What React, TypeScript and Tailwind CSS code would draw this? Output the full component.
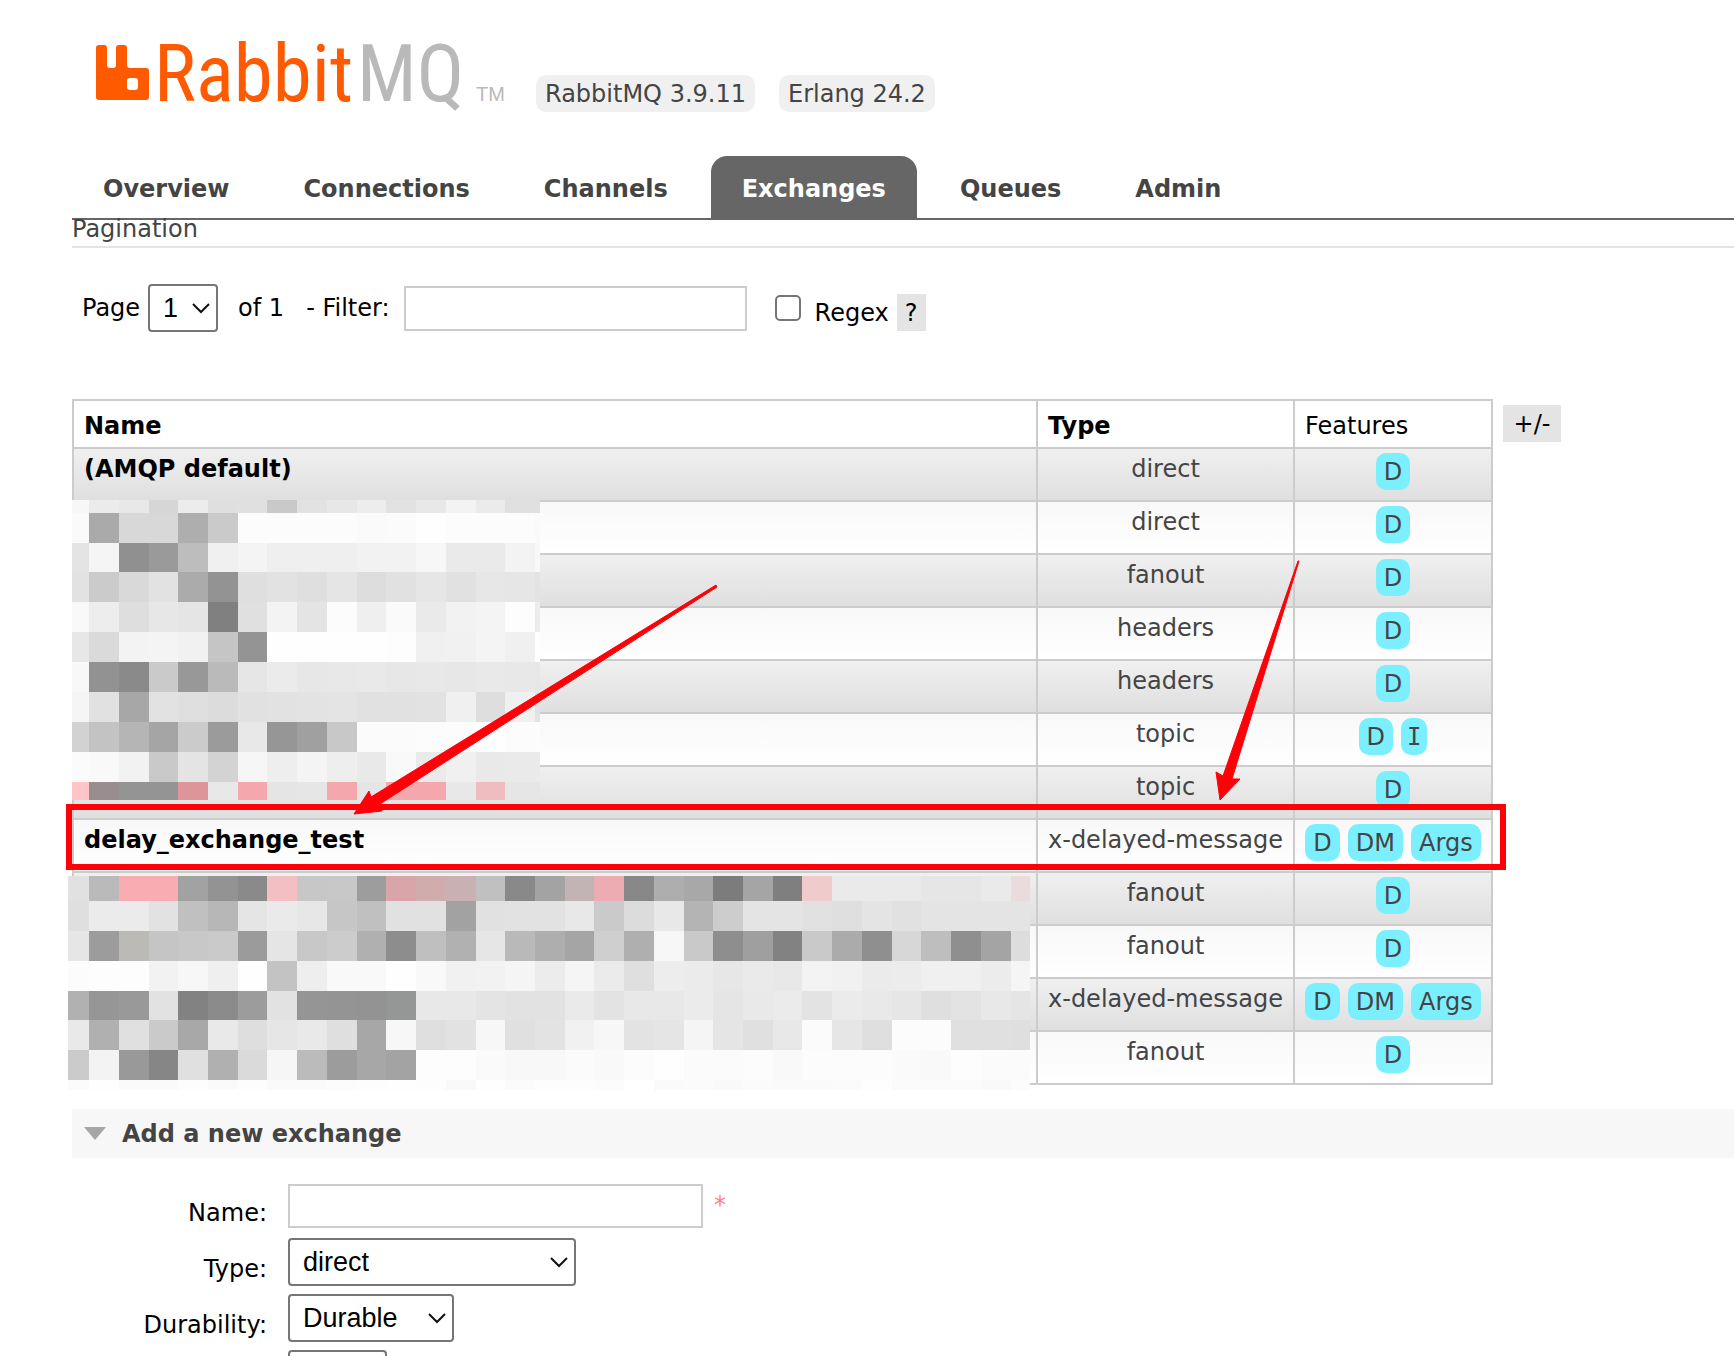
import React from "react";

interface Exchange {
  name: string;
  type: string;
  features: string[];
}

interface MosaicProps {
  xs: number[];
  ys: number[];
  rows: string[];
}

interface SelectProps {
  id: string;
  className: string;
  options: string[];
  label?: string;
}

const tabs = ["Overview", "Connections", "Channels", "Exchanges", "Queues", "Admin"];

// an empty name is a row hidden behind the mosaic
const exchanges: Exchange[] = [
  { name: "(AMQP default)", type: "direct", features: ["D"] },
  { name: "", type: "direct", features: ["D"] },
  { name: "", type: "fanout", features: ["D"] },
  { name: "", type: "headers", features: ["D"] },
  { name: "", type: "headers", features: ["D"] },
  { name: "", type: "topic", features: ["D", "I"] },
  { name: "", type: "topic", features: ["D"] },
  { name: "delay_exchange_test", type: "x-delayed-message", features: ["D", "DM", "Args"] },
  { name: "", type: "fanout", features: ["D"] },
  { name: "", type: "fanout", features: ["D"] },
  { name: "", type: "x-delayed-message", features: ["D", "DM", "Args"] },
  { name: "", type: "fanout", features: ["D"] },
];

// two digits are a grey level, six digits a full colour
const upperRows = [
  "f7 eb e8 d6 ec df e0 c9 e2 e7 ed e2 e8 f3 eb e0 e0",
  "fa aa d8 d8 ae ca fc fc fc fc fa fb fe fc fc fc fa",
  "e4 f5 90 9a bd f0 f4 ef ef ef f2 f2 f7 ea ea f3 f8",
  "e2 cb d9 e2 ab 93 df e2 df e5 dd e1 e6 e1 e7 e6 e3",
  "f9 ed de e7 e5 80 e0 f3 e4 fc ef fa ea f2 f4 fd ec",
  "e7 da f3 f4 f1 c5 94 fe fe fe fe fd f0 f1 f4 f0 fe",
  "f8 92 8a ca 98 ba e6 eb e7 e8 e9 e7 e8 e7 e9 e8 e7",
  "f5 e1 a7 e2 df dc e1 e2 e3 e4 e1 e1 e2 f0 de f0 e2",
  "d2 c3 b5 a5 cb 9b e8 96 a0 c8 fb fb fc fc fe fc fd",
  "fb f9 f2 c9 e4 d3 f6 ee f4 ee e9 f9 ea f0 e9 ea eb",
  "ffc4c8 9a8d8f 94 94 dd9599 e8 f4a7ad e5 e6 f4a7ad e5 f4a7ad f4a7ad e8 efbcc0 e6 e6",
];

const lowerRows = [
  "e1 ba f9acb2 f9acb2 a2 93 8a f4bfc3 c7 c8 9d daa5a9 d0acac c8b0b3 c0 89 a3 c2b4b5 edabb2 88 ae a8 7c a5 7f f0cbcc ea ea ea e6 e6 ea eadcdc",
  "df eb eb e2 c0 b7 e5 ea e7 c6 c0 e1 e1 a2 e1 e2 e2 e8 ca dc e8 b4 cd e4 e4 e1 df e4 e1 e4 e4 e4 e4",
  "e6 9c bbbab7 c5 c8 ca 9b e5 c8 cc b0 8d bf b1 e6 b9 ae a5 cf af f7 c9 8e 9f 82 c9 ab 8f d7 be 8f a4 dd",
  "fc fd fd f2 f7 ef fe c3 ee f9 f9 fe f9 f1 f2 f5 ec f5 eb df ed eb e7 ea e8 f3 f1 eb ec f0 f0 ec f5",
  "b1 96 99 e2 82 8b 9c e2 95 94 93 959796 e8 e8 e4 e2 e2 ea e3 e8 e8 eb e5 e9 eb e3 eb e9 e6 df e3 e8 e5",
  "e9 b0 e0 ca a8 e9 de e6 e9 df a7 f7 df e2 f7 e0 e3 f1 f7 e3 e5 f5 e5 e0 e8 fb e6 df fc fc e0 e0 df",
  "cb f3 99 86 e0 b0 da f6 bb 9c a7 a3 fd fd fa f8 f8 fb f9 fc fe fb fb fc f9 fc fc fc fa f9 fd fb fb",
  "fb fe fa fa fd fa fd fa fa fc fd fe fd f9 fe fb fd fd fc ff fa fb f9 fb fa fa fb fe fb fb fb f9 fc",
];

const upperXs = [72, 89, 119, 149, 178, 208, 238, 267, 297, 327, 357, 386, 416, 446, 476, 505, 535, 540];
const upperYs = [500, 513, 543, 572, 602, 632, 662, 692, 722, 752, 782, 800];
const lowerXs = [
  68, 89, 119, 149, 178, 208, 238, 267, 297, 327, 357, 386, 416, 446, 476, 505, 535, 565, 594, 624, 654, 684, 713,
  743, 773, 802, 832, 862, 892, 921, 951, 981, 1011, 1030,
];
const lowerYs = [876, 901, 931, 961, 991, 1020, 1050, 1080, 1090];

function Mosaic({ xs, ys, rows }: MosaicProps) {
  return (
    <g shapeRendering="crispEdges">
      {rows.map((row, r) =>
        row.split(" ").map((shade, c) => (
          <rect
            key={`${r}-${c}`}
            x={xs[c]}
            y={ys[r]}
            width={xs[c + 1] - xs[c]}
            height={ys[r + 1] - ys[r]}
            fill={shade.length === 2 ? `#${shade}${shade}${shade}` : `#${shade}`}
          />
        ))
      )}
    </g>
  );
}

function Annotations() {
  return (
    <svg
      className="absolute top-0 -left-[6px] pointer-events-none"
      width="1440"
      height="692"
      viewBox="66 399 1440 692"
      aria-hidden="true"
    >
      <Mosaic xs={upperXs} ys={upperYs} rows={upperRows} />
      <Mosaic xs={lowerXs} ys={lowerYs} rows={lowerRows} />
      <rect x="69" y="807" width="1434" height="60" fill="none" stroke="#ff0008" strokeWidth="6" />
      <path d="M716 585 L717 587 L380 804 L382 811 L354 814 L369 791 L371 797 Z" fill="#ff0008" stroke="#ff0008" />
      <path d="M1298 561 L1299 561 L1232 779 L1240 779 L1220 800 L1216 772 L1223 776 Z" fill="#ff0008" stroke="#ff0008" />
    </svg>
  );
}

function Logo() {
  return (
    <svg width="416" height="96" viewBox="96 24 416 96" role="img" aria-label="RabbitMQ">
      <path
        d="M99 45h5q3 0 3 3v17q0 3 3 3h3q3 0 3-3V48q0-3 3-3h5q3 0 3 3v17q0 3 3 3h16q3 0 3 3v26q0 3-3 3H99q-3 0-3-3V48q0-3 3-3zM130 78q-3 0-3 3v6q0 3 3 3h5q3 0 3-3v-6q0-3-3-3z"
        fill="#ff5a00"
        fillRule="evenodd"
      />
      <g className="font-['Roboto_Condensed','Roboto',sans-serif] font-normal" fontSize="79">
        <text x="154" y="101" fill="#ff5a00">
          Rabbit
        </text>
        <text x="357" y="101" fill="#b9b9b9">
          MQ
        </text>
      </g>
      <text x="476" y="101" fontSize="20" fill="#b9b9b9" className="font-['Liberation_Sans',sans-serif]">
        TM
      </text>
    </svg>
  );
}

function Select({ id, className, options, label }: SelectProps) {
  return (
    <div className={className}>
      <div className="relative">
        <select
          id={id}
          aria-label={label}
          className="block w-full h-12 appearance-none rounded border-2 border-[#767676] bg-white pl-[13px] text-[27px] leading-8 text-black font-['Liberation_Sans',sans-serif]"
        >
          {options.map((option) => (
            <option key={option}>{option}</option>
          ))}
        </select>
        <svg className="absolute right-2 top-[18px] pointer-events-none" width="18" height="12" viewBox="0 0 18 12">
          <path d="M1 2 L9 10 L17 2" fill="none" stroke="#111" strokeWidth="2" />
        </svg>
      </div>
    </div>
  );
}

function Feature({ label }: { label: string }) {
  // the sans "I" has no serifs, so it takes the mono face
  const font = label === "I" ? "px-[6px] font-['DejaVu_Sans_Mono',monospace]" : "px-2";
  return <span className={`${font} h-[37px] rounded-[10px] bg-[#7cefff] leading-[39px]`}>{label}</span>;
}

function App() {
  return (
    <div className="h-screen overflow-hidden bg-white pl-[72px] text-2xl text-[#444] font-['DejaVu_Sans',sans-serif]">
      <header className="border-b-2 border-[#666]">
        <div className="flex items-start h-[156px] pl-6 pt-6">
          <Logo />
          <div className="flex gap-6 pl-6 pt-[51px] leading-[39px]">
            <span className="h-[37px] rounded-[10px] bg-[#f0f0f0] px-[9px]">RabbitMQ 3.9.11</span>
            <span className="h-[37px] rounded-[10px] bg-[#f0f0f0] px-[9px]">Erlang 24.2</span>
          </div>
        </div>
        <nav className="flex gap-3 font-bold leading-[66px]">
          {tabs.map((tab) => (
            <a
              key={tab}
              href="#"
              className={
                tab === "Exchanges" ? "h-[62px] px-[31px] rounded-t-2xl bg-[#666] text-white" : "h-[62px] px-[31px]"
              }
            >
              {tab}
            </a>
          ))}
        </nav>
      </header>

      <main>
        <h2 className="border-b-2 border-[#e4e4e4] pb-2 leading-[18px]">Pagination</h2>

        <div className="flex items-center mt-9 pl-[10px] text-black leading-[30px]">
          <label htmlFor="page">Page</label>
          <Select id="page" className="ml-2 w-[70px]" options={["1"]} />
          <span className="ml-5">of 1</span>
          <label htmlFor="filter" className="ml-[22px]">
            - Filter:
          </label>
          <input id="filter" type="text" className="ml-[14px] h-[45px] w-[343px] border-2 border-[#ccc] px-2" />
          <input
            id="regex"
            type="checkbox"
            className="ml-7 size-[26px] appearance-none rounded-[5px] border-2 border-[#767676] bg-white"
          />
          <div className="flex gap-2 ml-[14px] pt-2 leading-[39px]">
            <label htmlFor="regex" className="h-[37px]">
              Regex
            </label>
            <button type="button" className="h-[37px] w-[29px] bg-[#e4e4e4]">
              ?
            </button>
          </div>
        </div>

        <div className="relative flex items-start gap-[10px] mt-[67px]">
          <table className="w-[1421px] table-fixed border-collapse leading-7">
            <thead>
              <tr className="h-12 text-left text-black">
                <th className="w-[964px] border-2 border-[#ccc] px-[10px] pt-1 font-bold">Name</th>
                <th className="w-[257px] border-2 border-[#ccc] px-[10px] pt-1 font-bold">Type</th>
                <th className="border-2 border-[#ccc] px-[10px] pt-1 font-normal">Features</th>
              </tr>
            </thead>
            <tbody>
              {exchanges.map((exchange, i) => (
                <tr
                  key={i}
                  className="h-[53px] align-top odd:bg-linear-to-b odd:from-[#f0f0f0] odd:to-[#dfdfdf] even:bg-linear-to-b even:from-[#f8f8f8] even:to-white"
                >
                  <td className="border-2 border-[#ccc] px-[10px] pt-[6px] font-bold text-black">{exchange.name}</td>
                  <td className="border-2 border-[#ccc] pt-[6px] text-center">{exchange.type}</td>
                  <td className="border-2 border-[#ccc] pt-1">
                    <div className="flex justify-center gap-2">
                      {exchange.features.map((feature) => (
                        <Feature key={feature} label={feature} />
                      ))}
                    </div>
                  </td>
                </tr>
              ))}
            </tbody>
          </table>
          <button type="button" className="mt-[6px] h-[37px] w-[58px] bg-[#e4e4e4] text-black leading-[39px]">
            +/-
          </button>
          <Annotations />
        </div>

        <h2 className="flex items-center h-[49px] mt-6 pl-3 gap-4 bg-[#f7f7f7] font-bold leading-[30px]">
          <svg width="22" height="13" viewBox="0 0 22 13" aria-hidden="true">
            <path d="M0 0h22L11 13z" fill="#a6a6a6" />
          </svg>
          Add a new exchange
        </h2>

        <form className="grid grid-cols-[195px_1fr] items-end gap-x-[21px] gap-y-2 mt-[26px] text-black leading-7">
          <label htmlFor="name" className="pb-[3px] text-right">
            Name:
          </label>
          <div className="flex h-[46px] items-start">
            <input id="name" type="text" className="h-11 w-[415px] border-2 border-[#ccc] px-2" />
            <span className="ml-[11px] mt-[7px] text-[#ff7f85]">*</span>
          </div>
          <label htmlFor="type" className="pb-[3px] text-right">
            Type:
          </label>
          <Select id="type" className="w-72" options={["direct", "fanout", "headers", "topic", "x-delayed-message"]} />
          <label htmlFor="durability" className="pb-[3px] text-right">
            Durability:
          </label>
          <Select id="durability" className="w-[166px]" options={["Durable", "Transient"]} />
          <Select id="auto-delete" className="col-start-2 w-[99px]" options={["No", "Yes"]} label="Auto delete" />
        </form>
      </main>
    </div>
  );
}

export default App;
